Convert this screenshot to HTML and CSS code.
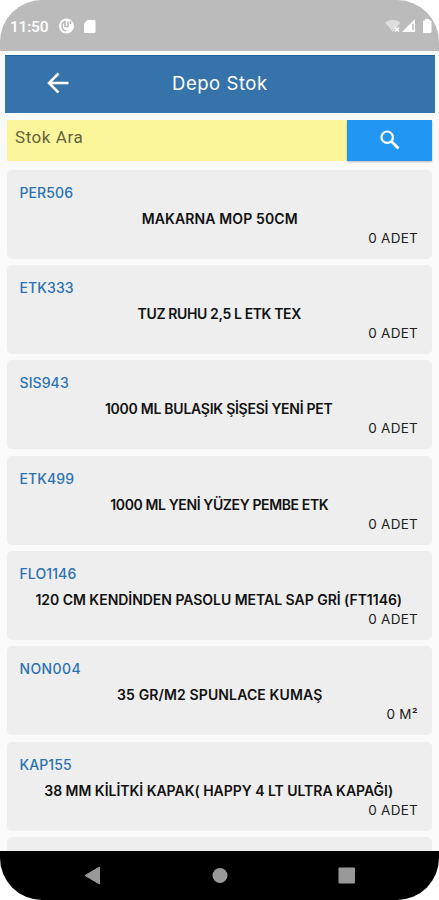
FILE: index.html
```
<!DOCTYPE html>
<html lang="tr">
<head>
<meta charset="utf-8">
<title>Depo Stok</title>
<link rel="stylesheet" href="styles.css">
</head>
<body>
<div class="phone">
  <div class="status">
    <span class="time">11:50</span>
    <svg class="left-icons" width="40" height="16" viewBox="0 0 40 16"><circle cx="7.500" cy="8" r="7.500" fill="#fff"/><path d="M7.500 13A5 5 0 0 1 6 3.500V8.500H9V3.500M11.500 3v3" fill="none" stroke="#bbb" stroke-width="1.600"/><path d="M28.500 2.500H36v12H25.500V5.500z" fill="#fff" stroke="#fff" stroke-linejoin="round"/></svg>
    <svg class="right-icons" width="48" height="16" viewBox="0 0 48 16"><path d="M0 4.500Q8-1 15.500 4.500L8 14z" fill="#dedede"/><path d="M10 9.500l4 4m0-4l-4 4" stroke="#fff" stroke-width="1.500"/><path d="M17 14L30 1v13z" fill="#fff"/><path d="M28 6v6" stroke="#bbb" stroke-width="1.500"/><path d="M38.500 3h2V1.500h3.500V3h2v11.500h-7.500z" fill="#fff" stroke="#fff" stroke-linejoin="round"/></svg>
  </div>
  <header class="header">
    <svg class="back" width="24" height="24" viewBox="0 0 24 24"><path d="M22.500 12H3M12.500 2.500L3 12l9.500 9.500" fill="none" stroke="#fff" stroke-width="2.500"/></svg>
    <h1>Depo Stok</h1>
  </header>
  <div class="search">
    <div class="field">Stok Ara</div>
    <div class="button"><svg width="20" height="20" viewBox="0 0 20 20"><circle cx="7.200" cy="7.200" r="5.700" fill="none" stroke="#fff" stroke-width="2.200"/><path d="M11.500 11.500l7 7" stroke="#fff" stroke-width="2.800"/></svg></div>
  </div>
  <main class="list">
    <article class="card"><div class="code">PER506</div><div class="name wide">MAKARNA MOP 50CM</div><div class="qty">0 ADET</div></article>
    <article class="card"><div class="code">ETK333</div><div class="name tight">TUZ RUHU 2,5 L ETK TEX</div><div class="qty">0 ADET</div></article>
    <article class="card"><div class="code">SIS943</div><div class="name snug">1000 ML BULAŞIK ŞİŞESİ YENİ PET</div><div class="qty">0 ADET</div></article>
    <article class="card"><div class="code">ETK499</div><div class="name tight">1000 ML YENİ YÜZEY PEMBE ETK</div><div class="qty">0 ADET</div></article>
    <article class="card"><div class="code">FLO1146</div><div class="name">120 CM KENDİNDEN PASOLU METAL SAP GRİ (FT1146)</div><div class="qty">0 ADET</div></article>
    <article class="card"><div class="code wide-code">NON004</div><div class="name wide">35 GR/M2 SPUNLACE KUMAŞ</div><div class="qty">0 M²</div></article>
    <article class="card"><div class="code">KAP155</div><div class="name">38 MM KİLİTKİ KAPAK( HAPPY 4 LT ULTRA KAPAĞI)</div><div class="qty">0 ADET</div></article>
    <article class="card"></article>
  </main>
  <nav class="nav">
    <svg width="439" height="48" viewBox="0 0 439 48"><path d="M85 24.500L99.500 16v17z" fill="#999" stroke="#999" stroke-linejoin="round"/><circle cx="220" cy="24.500" r="7.500" fill="#999"/><rect x="338.500" y="16.500" width="16.500" height="16" rx="1" fill="#999"/></svg>
  </nav>
</div>
</body>
</html>
```
FILE: styles.css
```
* { box-sizing: border-box; }
body { margin: 0; background: #fff; font-family: Inter, "Open Sans", sans-serif; }
.phone { width: 439px; height: 900px; overflow: hidden; border-radius: 42px; background: #fafafa; display: flex; flex-direction: column; }
.status { height: 51px; flex: none; background: #bbb; display: flex; align-items: flex-start; padding: 18px 7px 0 10px; }
.time { font: 500 15.500px/18px Roboto, sans-serif; color: #fff; width: 38px; margin-right: 11px; white-space: nowrap; letter-spacing: -.2px; }
.right-icons { margin-left: auto; margin-right: -1px; }
.header { flex: none; height: 58px; margin: 4px 4px 0 5px; background: #3673aa; border-top: 1px solid #1e609d; display: flex; align-items: center; padding: 0 0 3px 41px; color: #fff; }
.header h1 { margin: 0 0 0 102px; font-size: 18.500px; line-height: 26px; font-weight: 400; letter-spacing: .55px; }
.search { flex: none; display: flex; height: 41px; margin: 7px 7px 0; }
.field { width: 340px; background: #fcf69b; padding: 7px 8px; font: 400 17px/20px Roboto, sans-serif; color: #66623e; letter-spacing: .55px; }
.button { flex: 1; background: #2196f3; display: flex; align-items: center; justify-content: center; box-shadow: 0 1px 2px #0004; padding-bottom: 1px; }
.list { flex: 1; min-height: 0; overflow: hidden; padding: 8.500px 7px 0; display: flex; flex-direction: column; gap: 6.400px; }
.card { flex: none; height: 89px; background: #eee; border-radius: 5px; padding: 12px 14px 0 12.500px; }
.code { font-size: 14px; line-height: 22px; font-weight: 500; color: #2b72b3; letter-spacing: .1px; }
.wide-code { letter-spacing: .4px; }
.name { margin: 4px 0 0; font-size: 14px; line-height: 22px; font-weight: 600; color: #111; text-align: center; white-space: nowrap; letter-spacing: -.03px; }
.wide { letter-spacing: .13px; padding-left: 2px; }
.tight { letter-spacing: -.38px; padding-left: 1px; }
.snug { letter-spacing: -.26px; }
.qty { margin-top: -3px; font-size: 13.500px; line-height: 22px; color: #222; text-align: right; letter-spacing: .25px; }
.nav { height: 49px; flex: none; background: #000; }
.nav svg { display: block; }
```
